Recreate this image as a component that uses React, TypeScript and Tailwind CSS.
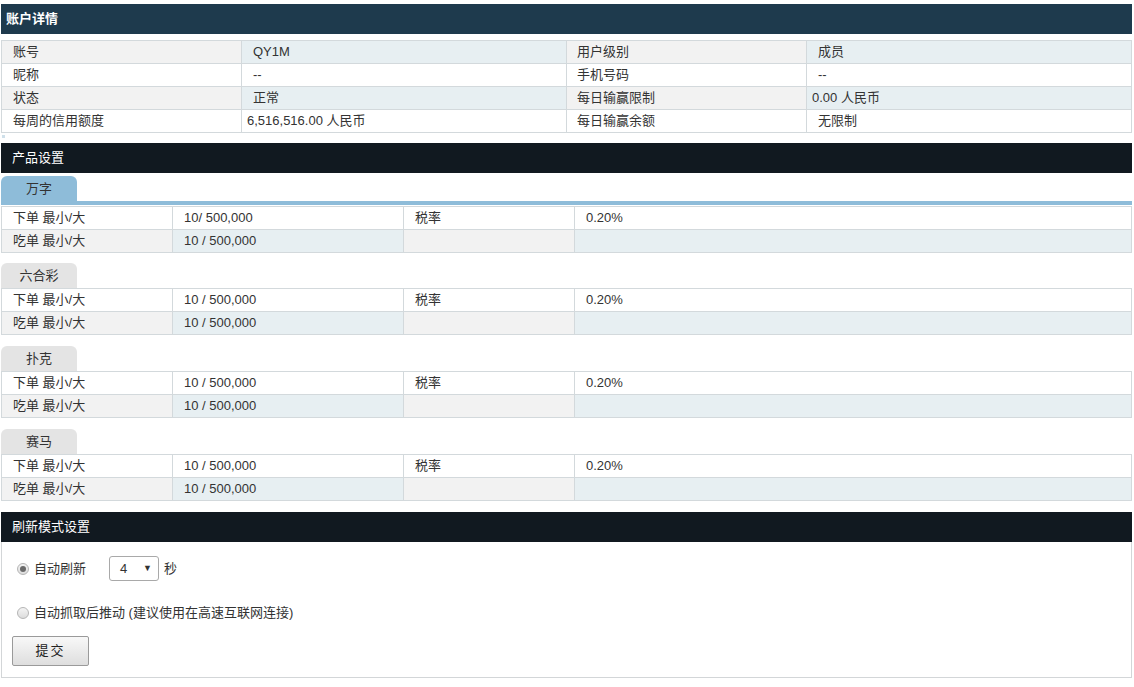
import React from "react";

const font = { fontFamily: '"Liberation Sans", Arial, "Noto Sans CJK SC", sans-serif' };

type Row = { a: string; b: string; c: string; d: string; bPad?: boolean; dPad?: boolean };

const accountRows: Row[] = [
  { a: "账号", b: "QY1M", c: "用户级别", d: "成员" },
  { a: "昵称", b: "--", c: "手机号码", d: "--" },
  { a: "状态", b: "正常", c: "每日输赢限制", d: "0.00 人民币", dPad: true },
  { a: "每周的信用额度", b: "6,516,516.00 人民币", c: "每日输赢余额", d: "无限制", bPad: true },
];

const products = ["万字", "六合彩", "扑克", "赛马"];
const blockGap = ["mt-[3px]", "mt-[10px]", "mt-[11px]", "mt-[11px]"];

function SectionHeader({ title, dark }: { title: string; dark?: boolean }) {
  return (
    <div
      className={`h-[30px] flex items-center text-white text-[13px] ${
        dark ? "bg-[#111920] pl-[11px]" : "bg-[#1e3a4d] pl-[5px] font-bold"
      }`}
    >
      {title}
    </div>
  );
}

function AccountTable() {
  return (
    <table className="w-full border-collapse mt-[6px] table-fixed text-[13px] text-[#333]">
      <colgroup>
        <col className="w-[240px]" />
        <col className="w-[325px]" />
        <col className="w-[240px]" />
        <col />
      </colgroup>
      <tbody>
        {accountRows.map((r, i) => {
          const odd = i % 2 === 0;
          return (
            <tr key={i} className="h-[23px]">
              <td className={`border border-[#d3d9dc] pl-[11px] ${odd ? "bg-[#f2f2f2]" : "bg-white"}`}>{r.a}</td>
              <td className={`border border-[#d3d9dc] ${r.bPad ? "pl-[5px]" : "pl-[11px]"} ${odd ? "bg-[#e7eff2]" : "bg-white"}`}>{r.b}</td>
              <td className={`border border-[#d3d9dc] pl-[10px] ${odd ? "bg-[#f2f2f2]" : "bg-white"}`}>{r.c}</td>
              <td className={`border border-[#d3d9dc] ${r.dPad ? "pl-[5px]" : "pl-[11px]"} ${odd ? "bg-[#e7eff2]" : "bg-white"}`}>{r.d}</td>
            </tr>
          );
        })}
      </tbody>
    </table>
  );
}

function ProductBlock({ name, index }: { name: string; index: number }) {
  const active = index === 0;
  return (
    <div className={blockGap[index]}>
      <div
        className={`w-[76px] h-[25px] rounded-t-[6px] flex items-center justify-center text-[13px] text-[#333] ${
          active ? "bg-[#8ebcd9]" : "bg-[#e4e4e4]"
        }`}
      >
        {name}
      </div>
      {active && <div className="h-[4px] bg-[#8ebcd9] mb-px" />}
      <table className="w-full border-collapse table-fixed text-[13px] text-[#333]">
        <colgroup>
          <col className="w-[171px]" />
          <col className="w-[231px]" />
          <col className="w-[171px]" />
          <col />
        </colgroup>
        <tbody>
          <tr className="h-[23px] bg-white">
            <td className="border border-[#d3d9dc] pl-[11px]">下单 最小/大</td>
            <td className="border border-[#d3d9dc] pl-[11px]">{active ? "10/ 500,000" : "10 / 500,000"}</td>
            <td className="border border-[#d3d9dc] pl-[11px]">税率</td>
            <td className="border border-[#d3d9dc] pl-[11px]">0.20%</td>
          </tr>
          <tr className="h-[23px]">
            <td className="border border-[#d3d9dc] pl-[11px] bg-[#f2f2f2]">吃单 最小/大</td>
            <td className="border border-[#d3d9dc] pl-[11px] bg-[#e7eff2]">10 / 500,000</td>
            <td className="border border-[#d3d9dc] bg-[#f2f2f2]"></td>
            <td className="border border-[#d3d9dc] bg-[#e7eff2]"></td>
          </tr>
        </tbody>
      </table>
    </div>
  );
}

function Radio({ checked }: { checked?: boolean }) {
  return (
    <span className="w-[12px] h-[12px] rounded-full border border-[#b5b5b5] bg-gradient-to-b from-[#f4f4f4] to-[#dcdcdc] flex items-center justify-center shrink-0">
      {checked && <span className="w-[6px] h-[6px] rounded-full bg-[#6a6a6a]" />}
    </span>
  );
}

export default function App() {
  return (
    <div className="bg-white w-[1134px] h-[687px] overflow-hidden" style={font}>
      <div className="ml-px w-[1131px] pt-[4px]">
        <SectionHeader title="账户详情" />
        <AccountTable />
        <div className="w-[3px] h-[3px] bg-[#cfe0ea] mt-[2px] ml-px" />
        <div className="mt-[5px]">
          <SectionHeader title="产品设置" dark />
        </div>
        {products.map((p, i) => (
          <ProductBlock key={p} name={p} index={i} />
        ))}
        <div className="mt-[11px]">
          <SectionHeader title="刷新模式设置" dark />
        </div>
        <div className="border border-t-0 border-[#d3d6d8] h-[136px] text-[13px] text-[#333] pl-[15px] pt-[14px]">
          <div className="flex items-center h-[25px]">
            <Radio checked />
            <span className="ml-[5px]">自动刷新</span>
            <div className="ml-[23px] w-[50px] h-[25px] border border-[#a9a9a9] rounded-[3px] flex items-center justify-between pl-[10px] pr-[6px]">
              <span>4</span>
              <span className="text-[9px] text-[#333]">▼</span>
            </div>
            <span className="ml-[5px]">秒</span>
          </div>
          <div className="flex items-center h-[16px] mt-[24px]">
            <Radio />
            <span className="ml-[5px]">自动抓取后推动 (建议使用在高速互联网连接)</span>
          </div>
          <button className="mt-[15px] -ml-[5px] w-[77px] h-[30px] border border-[#9a9a9a] rounded-[2px] bg-gradient-to-b from-[#f8f8f8] to-[#dedede] text-[13px] text-[#222] tracking-[2px]">
            提交
          </button>
        </div>
      </div>
    </div>
  );
}
